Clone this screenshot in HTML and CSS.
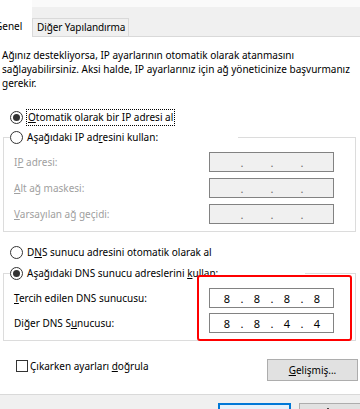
FILE: index.html
```html
<!DOCTYPE html>
<html lang="tr">
<head>
<meta charset="utf-8">
<title>IPv4 Özellikleri</title>
<link rel="stylesheet" href="styles.css">
</head>
<body>
<div class="dialog">
  <div class="tabstrip">
    <div class="tab tab-active">Genel</div>
    <div class="tab">Diğer Yapılandırma</div>
  </div>
  <div class="panel">
    <p class="desc">Ağınız destekliyorsa, IP ayarlarının otomatik olarak atanmasını<br>sağlayabilirsiniz. Aksi halde, IP ayarlarınız için ağ yöneticinize başvurmanız<br>gerekir.</p>

    <div class="optrow">
      <span class="radio on"></span>
      <span class="focus"><u>O</u>tomatik olarak bir IP adresi al</span>
    </div>

    <div class="group g1">
      <div class="legend l1">
        <span class="radio"></span>
        <span>Aşağıdaki IP ad<u>r</u>esini kullan:</span>
      </div>
      <div class="rows">
        <div class="frow">
          <span class="lbl disabled">I<u>P</u> adresi:</span>
          <div class="field off"><span class="oct"></span><span class="dot">.</span><span class="oct"></span><span class="dot">.</span><span class="oct"></span><span class="dot">.</span><span class="oct"></span></div>
        </div>
        <div class="frow">
          <span class="lbl disabled"><u>A</u>lt ağ maskesi:</span>
          <div class="field off"><span class="oct"></span><span class="dot">.</span><span class="oct"></span><span class="dot">.</span><span class="oct"></span><span class="dot">.</span><span class="oct"></span></div>
        </div>
        <div class="frow">
          <span class="lbl disabled"><u>V</u>arsayılan ağ geçidi:</span>
          <div class="field off"><span class="oct"></span><span class="dot">.</span><span class="oct"></span><span class="dot">.</span><span class="oct"></span><span class="dot">.</span><span class="oct"></span></div>
        </div>
      </div>
    </div>

    <div class="optrow dnsauto">
      <span class="radio"></span>
      <span>D<u>N</u>S sunucu adresini otomatik olarak al</span>
    </div>

    <div class="group g2">
      <div class="legend l2">
        <span class="radio on"></span>
        <span>Aşağıdaki DNS sunucu adreslerini <u>k</u>ullan:</span>
      </div>
      <div class="rows rows2">
        <div class="frow">
          <span class="lbl"><u>T</u>ercih edilen DNS sunucusu:</span>
          <div class="field"><span class="oct">8</span><span class="dot">.</span><span class="oct">8</span><span class="dot">.</span><span class="oct">8</span><span class="dot">.</span><span class="oct">8</span></div>
        </div>
        <div class="frow">
          <span class="lbl">Diğer DNS S<u>u</u>nucusu:</span>
          <div class="field"><span class="oct">8</span><span class="dot">.</span><span class="oct">8</span><span class="dot">.</span><span class="oct">4</span><span class="dot">.</span><span class="oct">4</span></div>
        </div>
      </div>
    </div>

    <div class="bottom">
      <label class="check"><span class="box"></span><span>Çıkarken ayarları <u>d</u>oğrula</span></label>
      <div class="btn"><span><u>G</u>elişmiş...</span></div>
    </div>
  </div>
  <div class="footer">
    <div class="fbtn default"></div>
    <div class="fbtn"><span class="fdot"></span></div>
  </div>
  <div class="annot"></div>
</div>
</body>
</html>
```
FILE: styles.css
```css
* { box-sizing: border-box; margin: 0; padding: 0; }
html, body { width: 360px; height: 409px; overflow: hidden; }
body {
  background: #f0f0f0;
  font-family: "Noto Sans", "Open Sans", sans-serif;
  font-size: 10px;
  color: #000;
}
u { text-decoration: underline; text-underline-offset: 1px; }

.dialog { position: relative; width: 360px; height: 409px; overflow: hidden; }

.tabstrip {
  height: 36px;
  display: flex;
  align-items: flex-end;
  background: linear-gradient(#fafafa 0 7px, #f0f0f0 7px);
}
.tab {
  width: 97px;
  height: 18px;
  padding: 0 0 0 4px;
  border: 1px solid #d9d9d9;
  border-bottom: none;
  line-height: 17px;
  background: #f0f0f0;
  white-space: nowrap;
  letter-spacing: -0.1px;
}
.tab-active {
  position: relative;
  z-index: 1;
  width: 40px;
  height: 37px;
  margin: 0 0 -1px -8px;
  padding: 18px 0 0 3px;
  border: none;
  background: #fff;
  letter-spacing: 0;
}

.panel {
  background: #fff;
  border-top: 1px solid #d9d9d9;
  border-bottom: 1px solid #d9d9d9;
  padding: 0 2px 13px 3px;
}
.desc {
  margin: 11px 0 0 -1px;
  line-height: 14px;
  white-space: nowrap;
}

.optrow {
  display: flex;
  align-items: center;
  height: 20px;
  margin: 17px 0 0 7px;
  white-space: nowrap;
}
.optrow.dnsauto { margin-top: 10px; }

.radio {
  flex: none;
  width: 13px;
  height: 13px;
  margin-right: 4px;
  border: 1px solid #333;
  border-radius: 50%;
  background: #fff;
  display: flex;
  align-items: center;
  justify-content: center;
}
.radio.on::after {
  content: "";
  width: 7px;
  height: 7px;
  border-radius: 50%;
  background: #333;
}
.focus {
  outline: 1px dotted #000;
  padding: 0 1px;
  line-height: 15px;
}

.group {
  border: 1px solid #dcdcdc;
  margin-right: 2px;
  padding-bottom: 7px;
}
.g1 { margin-top: 10px; }
.g2 { margin-top: 11px; }
.legend {
  display: flex;
  align-items: center;
  height: 20px;
  margin: -11px 0 0 6px;
  background: #fff;
  white-space: nowrap;
}
.l1 { width: 228px; }
.l2 { width: 295px; }

.rows {
  display: flex;
  flex-direction: column;
  gap: 6px;
  margin-top: 5px;
}
.rows2 { gap: 5px; }
.frow {
  display: flex;
  align-items: center;
  justify-content: space-between;
  height: 20px;
  padding: 0 21px 0 10px;
  white-space: nowrap;
}
.lbl.disabled { color: #a0a0a0; }

.field {
  width: 125px;
  height: 20px;
  border: 1px solid #828282;
  background: #fff;
  display: flex;
  align-items: center;
  padding-left: 3px;
  font-size: 11px;
}
.field.off { background: #f0f0f0; color: #6d6d6d; }
.oct { width: 28px; text-align: center; }
.dot { width: 2px; display: flex; justify-content: center; }

.bottom {
  display: flex;
  justify-content: space-between;
  align-items: flex-start;
  margin-top: 18px;
}
.check {
  display: flex;
  align-items: center;
  height: 13px;
  margin: 0 0 0 13px;
  white-space: nowrap;
}
.box {
  width: 12px;
  height: 12px;
  border: 1px solid #333;
  background: #fff;
  margin-right: 2px;
}
.btn {
  width: 91px;
  height: 22px;
  border: 1px solid #adadad;
  background: #e1e1e1;
  display: flex;
  align-items: center;
  justify-content: center;
}

.footer {
  display: flex;
  gap: 8px;
  padding: 8px 0 0 218px;
}
.fbtn {
  flex: none;
  width: 73px;
  height: 23px;
  border: 1px solid #adadad;
  background: #e1e1e1;
  display: flex;
  justify-content: center;
  padding: 3px 0 0 0;
}
.fdot {
  width: 2px;
  height: 2px;
  margin: 1px 16px 0 0;
  background: #444;
}
.fbtn.default { border: 2px solid #0078d7; background: #e5f1fb; }

.annot {
  position: absolute;
  left: 197px;
  top: 275px;
  width: 155px;
  height: 66px;
  border: 2px solid #f00;
  border-radius: 3px;
  pointer-events: none;
}
```
